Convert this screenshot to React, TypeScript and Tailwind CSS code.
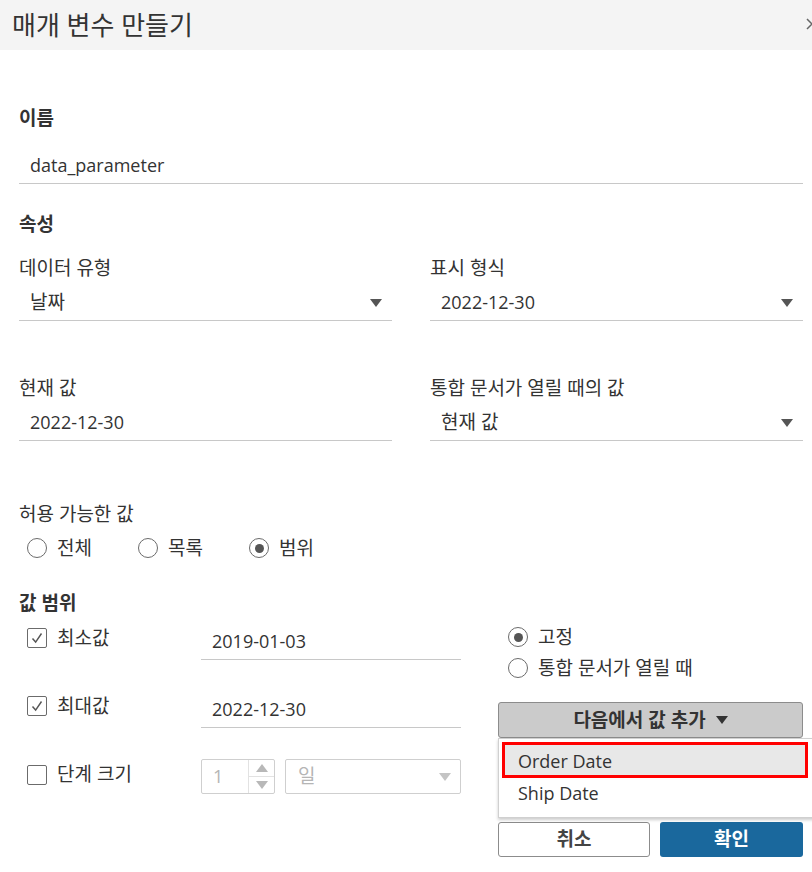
import type { ReactNode } from "react";

const FONT = "font-['Open_Sans','Noto_Sans_CJK_KR',sans-serif]";

function Caret({ className = "" }: { className?: string }) {
  return (
    <svg viewBox="0 0 12 8" className={`h-[8px] w-[12px] ${className}`} aria-hidden>
      <path d="M0 0h12L6 8z" fill="currentColor" />
    </svg>
  );
}

function Radio({ checked = false }: { checked?: boolean }) {
  return (
    <span className="flex h-[20px] w-[20px] shrink-0 items-center justify-center rounded-full border border-[#6b6b6b] bg-white">
      {checked ? <span className="h-[9px] w-[9px] rounded-full bg-[#555]" /> : null}
    </span>
  );
}

function Checkbox({ checked = false }: { checked?: boolean }) {
  return (
    <span className="flex h-[20px] w-[20px] shrink-0 items-center justify-center rounded-[2px] border border-[#6b6b6b] bg-white">
      {checked ? (
        <svg viewBox="0 0 20 20" className="h-[18px] w-[18px]" aria-hidden>
          <path d="M5 10.5l3.5 4L15 5" fill="none" stroke="#555" strokeWidth="1.6" />
        </svg>
      ) : null}
    </span>
  );
}

function Label({ children, bold = false }: { children: ReactNode; bold?: boolean }) {
  return (
    <div className={`h-[24px] leading-[24px] text-[19px] text-[#333] ${bold ? "font-bold" : ""}`}>
      {children}
    </div>
  );
}

// korean values render a touch wider in the original, so they get 19px
function Field({ value, select = false, ko = false }: { value: string; select?: boolean; ko?: boolean }) {
  return (
    <div
      className={`flex h-[36px] items-center border-b border-[#c8c8c8] pl-[11px] pr-[10px] text-[#333] ${
        ko ? "text-[19px]" : "text-[18px]"
      }`}
    >
      <span className="flex-1">{value}</span>
      {select ? <Caret className="text-[#555]" /> : null}
    </div>
  );
}

export default function App() {
  return (
    <div className={`relative h-[872px] w-[812px] overflow-hidden bg-white ${FONT} text-[#333]`}>
      <div className="flex h-[50px] items-center justify-between bg-[#f4f4f4] pl-[12px]">
        <span className="text-[26px] text-[#333]">매개 변수 만들기</span>
        <span className="mb-[2px] w-[7px] overflow-hidden">
          <svg viewBox="0 0 10 12" className="h-[12px] w-[10px]" aria-hidden>
            <path d="M2 1l5 5-5 5" fill="none" stroke="#666" strokeWidth="1.5" />
          </svg>
        </span>
      </div>

      <div className="pl-[19px] pr-[9px]">
        <div className="mt-[56px]">
          <Label bold>이름</Label>
        </div>
        <div className="mt-[18px]">
          <Field value="data_parameter" />
        </div>
        <div className="mt-[28px]">
          <Label bold>속성</Label>
        </div>

        <div className="mt-[20px] grid grid-cols-2 gap-x-[38px]">
          <div>
            <Label>데이터 유형</Label>
            <div className="mt-[5px]">
              <Field value="날짜" select ko />
            </div>
          </div>
          <div>
            <Label>표시 형식</Label>
            <div className="mt-[5px]">
              <Field value="2022-12-30" select />
            </div>
          </div>
        </div>

        <div className="mt-[55px] grid grid-cols-2 gap-x-[38px]">
          <div>
            <Label>현재 값</Label>
            <div className="mt-[5px]">
              <Field value="2022-12-30" />
            </div>
          </div>
          <div>
            <Label>통합 문서가 열릴 때의 값</Label>
            <div className="mt-[5px]">
              <Field value="현재 값" select ko />
            </div>
          </div>
        </div>

        <div className="mt-[61px]">
          <Label>허용 가능한 값</Label>
        </div>
        <div className="mt-[10px] flex h-[24px] items-center pl-[8px] text-[19px]">
          <span className="flex w-[111px] items-center gap-[10px]">
            <Radio /> 전체
          </span>
          <span className="flex w-[111px] items-center gap-[10px]">
            <Radio /> 목록
          </span>
          <span className="flex items-center gap-[10px]">
            <Radio checked /> 범위
          </span>
        </div>

        <div className="mt-[31px]">
          <Label bold>값 범위</Label>
        </div>

        <div className="mt-[9px] flex">
          <div className="w-[442px]">
            <div className="flex h-[36px] items-start">
              <div className="mt-[2px] flex h-[24px] w-[182px] items-center gap-[10px] pl-[8px] text-[19px]">
                <Checkbox checked /> 최소값
              </div>
              <div className="w-[260px]">
                <Field value="2019-01-03" />
              </div>
            </div>
            <div className="mt-[32px] flex h-[36px] items-start">
              <div className="mt-[2px] flex h-[24px] w-[182px] items-center gap-[10px] pl-[8px] text-[19px]">
                <Checkbox checked /> 최대값
              </div>
              <div className="w-[260px]">
                <Field value="2022-12-30" />
              </div>
            </div>
            <div className="mt-[31px] flex h-[35px] items-center">
              <div className="-mt-[4px] flex h-[24px] w-[182px] items-center gap-[10px] pl-[8px] text-[19px]">
                <Checkbox /> 단계 크기
              </div>
              <div className="flex h-[35px] w-[74px] rounded-[2px] border border-[#cfcfcf]">
                <span className="flex flex-1 items-center pl-[11px] text-[18px] text-[#b5b5b5]">1</span>
                <span className="flex w-[26px] flex-col border-l border-[#e2e2e2]">
                  <span className="flex flex-1 items-center justify-center border-b border-[#e2e2e2]">
                    <Caret className="h-[5px] w-[9px] rotate-180 text-[#b8b8b8]" />
                  </span>
                  <span className="flex flex-1 items-center justify-center">
                    <Caret className="h-[5px] w-[9px] text-[#b8b8b8]" />
                  </span>
                </span>
              </div>
              <div className="ml-[10px] flex h-[35px] w-[176px] items-center rounded-[2px] border border-[#cfcfcf] pl-[12px] pr-[9px] text-[19px] text-[#b5b5b5]">
                <span className="flex-1">일</span>
                <Caret className="text-[#c4c4c4]" />
              </div>
            </div>
          </div>

          <div className="ml-[37px] w-[305px]">
            <div className="mt-[1px] flex h-[24px] items-center gap-[10px] pl-[10px] text-[19px]">
              <Radio checked /> 고정
            </div>
            <div className="mt-[7px] flex h-[24px] items-center gap-[10px] pl-[10px] text-[19px]">
              <Radio /> 통합 문서가 열릴 때
            </div>
            <div className="relative mt-[22px]">
              <div className="flex h-[36px] items-center justify-center gap-[10px] rounded-[3px] border border-[#8c8c8c] bg-[#cbcbcb] text-[19px] font-bold text-[#333]">
                다음에서 값 추가
                <Caret className="h-[7px] w-[11px] text-[#333]" />
              </div>
              <div className="absolute left-0 top-full z-10 h-[80px] w-[330px] border border-[#d0d0d0] bg-white pt-[3px] shadow-[0_2px_3px_rgba(0,0,0,0.2)]">
                <div className="mx-[3px] flex h-[36px] w-[306px] items-center border-[3px] border-[#ff0000] bg-[#e8e8e8] pl-[13px] pt-[2px] text-[18px] text-[#333]">
                  Order Date
                </div>
                <div className="flex h-[30px] items-center pl-[19px] text-[18px] text-[#333]">Ship Date</div>
              </div>
            </div>
            <div className="mt-[84px] flex gap-[10px]">
              <div className="flex h-[35px] w-[152px] items-center justify-center rounded-[3px] border border-[#8c8c8c] bg-white text-[19px] font-bold text-[#444]">
                취소
              </div>
              <div className="flex h-[35px] w-[143px] items-center justify-center rounded-[3px] bg-[#1a689d] text-[19px] font-bold text-white">
                확인
              </div>
            </div>
          </div>
        </div>
      </div>
    </div>
  );
}
